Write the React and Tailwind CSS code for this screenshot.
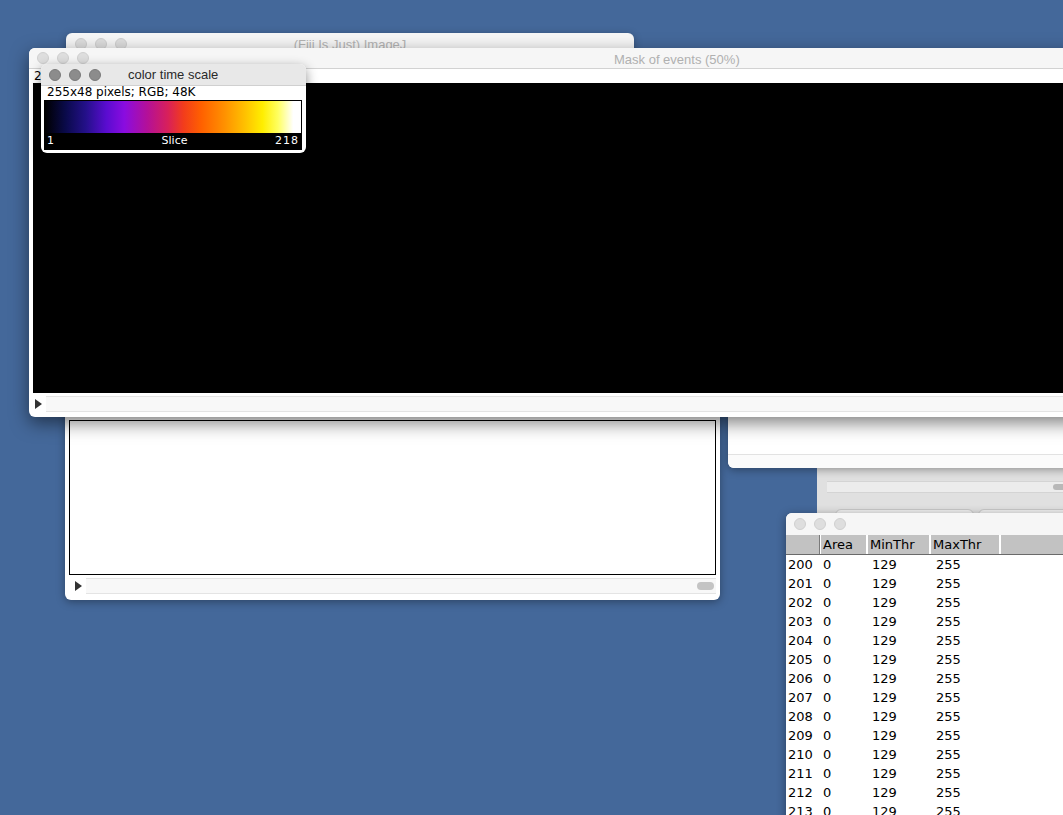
import React from 'react';

const rows = Array.from({ length: 14 }, (_, i) => 200 + i);

const fire =
  'linear-gradient(to right, #000000 0%, #0a0a4a 8%, #24108a 16%, #5a0cd0 24%, #8a0ce0 31%, #b41098 40%, #d8205a 48%, #f23c1c 54%, #ff6000 61%, #ff9000 70%, #ffc000 78%, #ffee00 85%, #ffff60 91%, #ffffff 97%, #ffffff 100%)';

function Lights({ dark }) {
  const c = dark
    ? 'bg-[#8c8c8c] border-[#7a7a7a]'
    : 'bg-[#dedede] border-[#d0d0d0]';
  return (
    <div className="flex items-center gap-2">
      <span className={`w-3 h-3 rounded-full border ${c}`} />
      <span className={`w-3 h-3 rounded-full border ${c}`} />
      <span className={`w-3 h-3 rounded-full border ${c}`} />
    </div>
  );
}

function Scroller({ thumb }) {
  return (
    <div className="flex items-center h-4">
      <svg width="10" height="12" viewBox="0 0 10 12" className="shrink-0 ml-1">
        <path d="M2 1 L9 6 L2 11 Z" fill="#333" />
      </svg>
      <div className="flex-1 h-4 ml-[3px] bg-[#f8f8f8] border-y border-[#e4e4e4] flex items-center justify-end pr-[2px]">
        {thumb && <div className="w-[17px] h-[8px] rounded-full bg-[#c4c4c4]" />}
      </div>
    </div>
  );
}

export default function App() {
  return (
    <div
      className="relative w-[1063px] h-[815px] overflow-hidden bg-[#44689a]"
      style={{ fontFamily: '"Liberation Sans", Arial, sans-serif' }}
    >
      {/* ImageJ main window, mostly hidden */}
      <div className="absolute left-[66px] top-[33px] w-[568px] h-[60px] bg-[#f6f6f6] rounded-t-md shadow-[0_2px_8px_rgba(0,0,0,0.3)]">
        <div className="h-[22px] px-[9px] flex items-center relative">
          <Lights />
          <span className="absolute left-0 right-0 text-center text-[13px] text-[#b4b4b4] top-[2px]">
            (Fiji Is Just) ImageJ
          </span>
        </div>
      </div>

      {/* gray panel behind, lower right */}
      <div className="absolute left-[817px] top-[455px] w-[260px] h-[70px] bg-[#e0e0e0] flex flex-col">
        <div className="h-[13px] flex justify-center pl-[20px] items-end">
          <div className="w-[18px] h-[6px] rounded-full bg-[#a8a8a8] ml-[12px]" />
        </div>
        <div className="mt-[13px] ml-[10px] h-[12px] bg-[#ececec] border-y border-[#d4d4d4] flex items-center justify-end pr-[4px]">
          <div className="w-[16px] h-[6px] rounded-full bg-[#b8b8b8] mr-[4px]" />
        </div>
        <div className="mt-[16px] ml-[18px] flex gap-[4px]">
          <div className="w-[140px] h-[10px] rounded-t-md border border-[#c8c8c8] bg-[#f0f0f0]" />
          <div className="w-[100px] h-[10px] rounded-t-md border border-[#c8c8c8] bg-[#f0f0f0]" />
        </div>
      </div>

      {/* right window, bottom visible */}
      <div className="absolute left-[728px] top-[395px] w-[360px] h-[73px] bg-white rounded-b-md shadow-[0_2px_8px_rgba(0,0,0,0.35)] flex flex-col">
        <div className="flex-1" />
        <div className="h-[14px] border-t border-[#e2e2e2] bg-[#fbfbfb] rounded-b-md" />
      </div>

      {/* lower-left image window */}
      <div className="absolute left-[65px] top-[395px] w-[655px] h-[205px] bg-white rounded-b-md shadow-[0_2px_8px_rgba(0,0,0,0.35)] flex flex-col px-[4px]">
        <div className="mt-[25px] h-[155px] border border-black bg-white" />
        <div className="mt-[3px]">
          <Scroller thumb />
        </div>
      </div>

      {/* Mask of events window */}
      <div className="absolute left-[29px] top-[48px] w-[1100px] h-[369px] bg-white rounded-t-md rounded-bl-md shadow-[0_6px_18px_rgba(0,0,0,0.5)] flex flex-col">
        <div className="h-[21px] bg-[#f6f6f6] border-b border-[#d2d2d2] rounded-t-md flex items-center px-[8px] relative">
          <Lights />
          <span className="absolute left-[585px] top-[2px] text-[13px] text-[#b0b0b0]">
            Mask of events (50%)
          </span>
        </div>
        <div
          className="h-[14px] text-[12px] leading-[14px] text-black pl-[5px]"
          style={{ fontFamily: '"DejaVu Sans", sans-serif' }}
        >
          2
        </div>
        <div className="ml-[4px] h-[310px] bg-black" />
        <div className="mt-[3px]">
          <Scroller />
        </div>
      </div>

      {/* color time scale window */}
      <div className="absolute left-[41px] top-[64px] w-[265px] h-[89px] bg-white rounded-md shadow-[0_4px_12px_rgba(0,0,0,0.45)] flex flex-col">
        <div className="h-[22px] shrink-0 bg-[#e8e8e8] border-b border-[#d0d0d0] rounded-t-md flex items-center px-[8px] pt-[1px] gap-[23px]">
          <Lights dark />
          <span className="text-[13px] text-[#2a2a2a] ml-[4px]">color time scale</span>
        </div>
        <div
          className="text-[12px] leading-[13px] text-black pl-[6px]"
          style={{ fontFamily: '"DejaVu Sans", sans-serif' }}
        >
          255x48 pixels; RGB; 48K
        </div>
        <div className="mx-[3px] mt-[1px] w-[258px] border border-black flex flex-col bg-black">
          <div className="h-[32px] bg-white">
            <div className="h-full" style={{ background: fire }} />
          </div>
          <div
            className="h-[16px] flex items-center justify-between px-[2px] text-[11px] text-white"
            style={{ fontFamily: '"DejaVu Sans", sans-serif' }}
          >
            <span>1</span>
            <span className="ml-[20px]">Slice</span>
            <span className="tracking-[1px]">218</span>
          </div>
        </div>
      </div>

      {/* Results table window */}
      <div
        className="absolute left-[786px] top-[513px] w-[290px] h-[320px] bg-white rounded-t-md shadow-[0_2px_10px_rgba(0,0,0,0.4)] flex flex-col"
        style={{ fontFamily: '"DejaVu Sans", sans-serif' }}
      >
        <div className="h-[22px] bg-[#f6f6f6] rounded-t-md flex items-center px-[8px]">
          <Lights />
        </div>
        <div className="h-[20px] bg-[#c2c2c2] border-b border-[#6a6a6a] flex text-[13px] text-black">
          <div className="w-[34px] border-r border-[#7a7a7a]" />
          <div className="w-[47px] border-l border-white border-r border-[#7a7a7a] pl-[2px] leading-[19px]">Area</div>
          <div className="w-[63px] border-l border-white border-r border-[#7a7a7a] pl-[2px] leading-[19px]">MinThr</div>
          <div className="w-[70px] border-l border-white border-r border-[#7a7a7a] pl-[2px] leading-[19px]">MaxThr</div>
          <div className="flex-1 border-l border-white" />
        </div>
        <div className="flex flex-col text-[13px] text-black">
          {rows.map(r => (
            <div key={r} className="h-[19px] flex items-center -mt-[0px]">
              <span className="w-[35px] pl-[2px]">{r}</span>
              <span className="w-[48px] pl-[2px]">0</span>
              <span className="w-[64px] pl-[3px]">129</span>
              <span className="pl-[3px]">255</span>
            </div>
          ))}
        </div>
      </div>
    </div>
  );
}
